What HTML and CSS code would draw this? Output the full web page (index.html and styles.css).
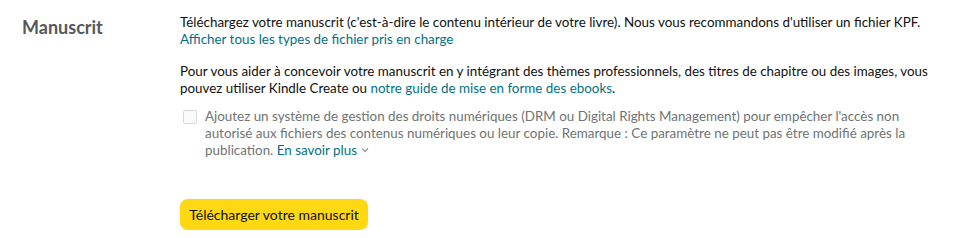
FILE: index.html
```html
<!DOCTYPE html>
<html>
<head>
  <title>Manuscrit</title>
  <meta charset="UTF-8">
  <link rel="stylesheet" href="styles.css">
</head>
<body>
  <div class="section">
    <div class="label">Manuscrit</div>
    <div class="body">
      <p class="para">
        Téléchargez votre manuscrit (c'est-à-dire le contenu intérieur de votre livre). Nous vous recommandons d'utiliser un fichier KPF.<br>
        <a href="#" class="link">Afficher tous les types de fichier pris en charge</a>
      </p>
      <p class="para">
        Pour vous aider à concevoir votre manuscrit en y intégrant des thèmes professionnels, des titres de chapitre ou des images, vous pouvez utiliser Kindle Create ou <a href="#" class="link">notre guide de mise en forme des ebooks</a>.
      </p>
      <label class="drm">
        <span class="box"></span>
        <span class="drm-text">
          Ajoutez un système de gestion des droits numériques (DRM ou Digital Rights Management) pour empêcher l'accès non autorisé aux fichiers des contenus numériques ou leur copie. Remarque : Ce paramètre ne peut pas être modifié après la publication.
          <a href="#" class="link">En savoir plus</a>
          <svg class="chev" width="8" height="6" viewBox="0 0 8 6"><path d="M1 1.5 L4 4.5 L7 1.5" fill="none" stroke="#8d9090" stroke-width="1.1"/></svg>
        </span>
      </label>
      <button class="upload">Télécharger votre manuscrit</button>
    </div>
  </div>
</body>
</html>
```

FILE: styles.css
```css
* {
  padding: 0;
  margin: 0;
  box-sizing: border-box;
}

body {
  font-family: Lato, "Liberation Sans", sans-serif;
  font-size: 13.4px;
  line-height: 17px;
  color: #0f1111;
  background: #fff;
}

.section {
  display: flex;
  padding-top: 14px;
}

.label {
  width: 180px;
  padding-left: 22px;
  padding-top: 3px;
  font-size: 18px;
  line-height: 20px;
  font-weight: bold;
  color: #565959;
}

.body {
  width: 760px;
}

.para {
  margin-bottom: 15px;
}

.link {
  color: #007185;
  text-decoration: none;
}

.drm {
  display: flex;
  gap: 8px;
  padding-left: 3px;
  margin-top: -4px;
  color: #6f7373;
}

.box {
  flex: none;
  width: 14px;
  height: 14px;
  margin-top: 2px;
  border: 1px solid #d5d9d9;
  border-radius: 2px;
  background: #fafafa;
}

.drm-text {
  flex: 1;
}

.chev {
  vertical-align: 2px;
  margin-left: 1px;
}

.upload {
  display: block;
  margin-top: 40px;
  width: 188px;
  height: 31px;
  border: 0;
  border-radius: 8px;
  background: #ffd814;
  box-shadow: 0 2px 5px rgba(213, 217, 217, 0.5);
  font-family: inherit;
  font-size: 14px;
  color: #0f1111;
  cursor: pointer;
}
```
